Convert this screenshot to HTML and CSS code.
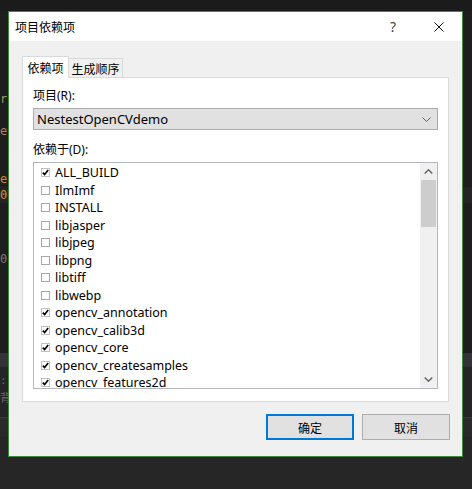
FILE: index.html
```html
<!DOCTYPE html>
<html lang="zh-CN">
<head>
<meta charset="utf-8">
<title>项目依赖项</title>
<link rel="stylesheet" href="styles.css">
</head>
<body>
<div class="screen">
  <div class="editor">
    <div class="topbar"></div>
    <div class="code">
      <div class="ln"></div><div class="ln"></div><div class="ln"></div><div class="ln"></div><div class="ln"></div>
      <div class="ln"><span class="frag olive">r;</span></div>
      <div class="ln"></div>
      <div class="ln"><span class="frag brown">e;</span></div>
      <div class="ln"></div><div class="ln"></div>
      <div class="ln"><span class="frag orange">e;</span></div>
      <div class="ln hl"><span class="frag amber">0;</span></div>
      <div class="ln"></div><div class="ln"></div><div class="ln"></div>
      <div class="ln"><span class="frag grey">0;</span></div>
      <div class="ln"></div><div class="ln"></div><div class="ln"></div><div class="ln"></div><div class="ln"></div>
    </div>
    <div class="band"></div>
    <div class="panelarea">
      <div class="pl"><span class="frag dim">::</span></div>
      <div class="pl"><span class="frag dim">背</span></div>
    </div>
    <div class="status"></div>
    <div class="bottom"></div>
  </div>

  <div class="dialog">
    <div class="titlebar">
      <span class="title">项目依赖项</span>
      <span class="tbtn help">?</span>
      <span class="tbtn close">
        <svg width="10" height="10" viewBox="0 0 10 10"><path d="M0.5 0.5 L9.5 9.5 M9.5 0.5 L0.5 9.5" stroke="#111" stroke-width="1" fill="none"/></svg>
      </span>
    </div>
    <div class="body">
      <div class="tabs">
        <div class="tab active">依赖项</div>
        <div class="tab">生成顺序</div>
      </div>
      <div class="panel">
        <div class="label">项目(R):</div>
        <div class="combo">
          <span class="combo-text">NestestOpenCVdemo</span>
          <svg class="combo-arrow" width="9" height="5" viewBox="0 0 9 5"><path d="M0.5 0.5 L4.5 4.5 L8.5 0.5" stroke="#606060" stroke-width="1" fill="none"/></svg>
        </div>
        <div class="label label2">依赖于(D):</div>
        <div class="listbox">
          <div class="items">
            <div class="item"><span class="cb on"><svg width="7" height="7" viewBox="0 0 7 7"><path d="M0.8 3.6 L2.6 5.6 L6.2 1" stroke="#000" stroke-width="1.6" fill="none"/></svg></span>ALL_BUILD</div>
            <div class="item"><span class="cb"></span>IlmImf</div>
            <div class="item"><span class="cb"></span>INSTALL</div>
            <div class="item"><span class="cb"></span>libjasper</div>
            <div class="item"><span class="cb"></span>libjpeg</div>
            <div class="item"><span class="cb"></span>libpng</div>
            <div class="item"><span class="cb"></span>libtiff</div>
            <div class="item"><span class="cb"></span>libwebp</div>
            <div class="item"><span class="cb on"><svg width="7" height="7" viewBox="0 0 7 7"><path d="M0.8 3.6 L2.6 5.6 L6.2 1" stroke="#000" stroke-width="1.6" fill="none"/></svg></span>opencv_annotation</div>
            <div class="item"><span class="cb on"><svg width="7" height="7" viewBox="0 0 7 7"><path d="M0.8 3.6 L2.6 5.6 L6.2 1" stroke="#000" stroke-width="1.6" fill="none"/></svg></span>opencv_calib3d</div>
            <div class="item"><span class="cb on"><svg width="7" height="7" viewBox="0 0 7 7"><path d="M0.8 3.6 L2.6 5.6 L6.2 1" stroke="#000" stroke-width="1.6" fill="none"/></svg></span>opencv_core</div>
            <div class="item"><span class="cb on"><svg width="7" height="7" viewBox="0 0 7 7"><path d="M0.8 3.6 L2.6 5.6 L6.2 1" stroke="#000" stroke-width="1.6" fill="none"/></svg></span>opencv_createsamples</div>
            <div class="item"><span class="cb on"><svg width="7" height="7" viewBox="0 0 7 7"><path d="M0.8 3.6 L2.6 5.6 L6.2 1" stroke="#000" stroke-width="1.6" fill="none"/></svg></span>opencv_features2d</div>
          </div>
          <div class="scrollbar">
            <div class="sarrow"><svg width="9" height="5" viewBox="0 0 9 5"><path d="M0.7 4.5 L4.5 0.8 L8.3 4.5" stroke="#606060" stroke-width="1.4" fill="none"/></svg></div>
            <div class="thumb"></div>
            <div class="strack"></div>
            <div class="sarrow"><svg width="9" height="5" viewBox="0 0 9 5"><path d="M0.7 0.5 L4.5 4.2 L8.3 0.5" stroke="#606060" stroke-width="1.4" fill="none"/></svg></div>
          </div>
        </div>
      </div>
      <div class="buttons">
        <div class="btn default">确定</div>
        <div class="btn">取消</div>
      </div>
    </div>
  </div>
</div>
</body>
</html>
```
FILE: styles.css
```css
html, body {
  margin: 0;
  padding: 0;
  width: 472px;
  height: 489px;
  overflow: hidden;
  background: #1e1e1e;
}

.screen {
  position: relative;
  width: 472px;
  height: 489px;
  font-family: "Noto Sans", "Noto Sans CJK SC", sans-serif;
  font-size: 12px;
  color: #000;
}

/* background editor */
.editor {
  display: flex;
  flex-direction: column;
  height: 489px;
}
.topbar { height: 11px; background: #1b1b1b; }
.code { height: 342px; background: #1e1e1e; overflow: hidden; }
.ln { height: 16px; line-height: 16px; overflow: hidden; white-space: nowrap; }
.ln.hl { background: #252526; }
.frag {
  display: inline-block;
  font-family: "DejaVu Sans Mono", monospace;
  font-size: 12px;
}
.olive { color: #9a9a62; }
.brown { color: #b0805a; }
.orange { color: #d7832a; }
.amber { color: #c8963c; }
.grey { color: #7a7a7a; }
.dim { color: #6a6a6a; font-size: 11px; }
.band { height: 14px; background: #333337; }
.panelarea { height: 50px; background: #252526; padding-top: 4px; box-sizing: border-box; }
.pl { height: 18px; line-height: 18px; overflow: hidden; white-space: nowrap; }
.status { height: 20px; background: #2a2a2a; border-top: 1px solid #3a3a3a; box-sizing: border-box; }
.bottom { flex: 1; background: #262626; }

/* dialog window */
.dialog {
  position: absolute;
  left: 8px;
  top: 11px;
  width: 455px;
  height: 446px;
  box-sizing: border-box;
  border: 1px solid #3d8a3a;
  background: #f0f0f0;
  display: flex;
  flex-direction: column;
}

.titlebar {
  height: 29px;
  background: #fff;
  display: flex;
  align-items: center;
  padding-left: 6px;
  flex-shrink: 0;
}
.title { flex: 1; font-size: 12px; color: #000; font-family: "Noto Sans CJK SC", sans-serif; }
.tbtn {
  width: 46px;
  height: 29px;
  display: flex;
  align-items: center;
  justify-content: center;
}
.help { font-size: 14px; color: #444; font-family: "Noto Sans", sans-serif; }

.body {
  flex: 1;
  padding: 15px 13px 0 13px;
  display: flex;
  flex-direction: column;
}

.tabs {
  display: flex;
  align-items: flex-end;
  height: 22px;
  margin-bottom: -1px;
  position: relative;
  z-index: 1;
}
.tab {
  box-sizing: border-box;
  height: 20px;
  width: 54px;
  border: 1px solid #d9d9d9;
  border-left: none;
  background: #f0f0f0;
  display: flex;
  align-items: center;
  justify-content: center;
  font-family: "Noto Sans CJK SC", sans-serif;
  font-size: 12px;
}
.tab.active {
  height: 22px;
  width: 47px;
  border-left: 1px solid #d9d9d9;
  border-bottom: none;
  background: #fff;
  padding-bottom: 1px;
}

.panel {
  box-sizing: border-box;
  height: 325px;
  background: #fff;
  border: 1px solid #d9d9d9;
  padding: 10px 10px 0 10px;
}
.label {
  height: 16px;
  line-height: 16px;
  font-family: "Noto Sans", "Noto Sans CJK SC", sans-serif;
}
.label2 { margin-top: 12px; }

.combo {
  box-sizing: border-box;
  margin-top: 4px;
  height: 22px;
  background: #e1e1e1;
  border: 1px solid #adadad;
  display: flex;
  align-items: center;
  padding: 0 6px 0 3px;
  width: 405px;
}
.combo-text { flex: 1; font-size: 13px; }

.listbox {
  box-sizing: border-box;
  margin-top: 4px;
  height: 227px;
  width: 405px;
  border: 1px solid #b4b6bd;
  display: flex;
  background: #fff;
}
.items {
  flex: 1;
  overflow: hidden;
  padding-top: 1px;
}
.item {
  height: 17.5px;
  line-height: 17.5px;
  display: flex;
  align-items: center;
  padding-left: 7px;
  white-space: nowrap;
  font-size: 12.5px;
}
.cb {
  box-sizing: border-box;
  width: 9px;
  height: 9px;
  border: 1px solid #a8a8a8;
  background: #fff;
  margin-right: 5px;
  display: flex;
  align-items: center;
  justify-content: center;
  flex-shrink: 0;
}
.cb.on { border-color: #c0c0c0; }

.scrollbar {
  width: 17px;
  background: #f0f0f0;
  display: flex;
  flex-direction: column;
}
.sarrow {
  height: 17px;
  display: flex;
  align-items: center;
  justify-content: center;
}
.thumb {
  height: 47px;
  margin: 0 1px;
  background: #cdcdcd;
}
.strack { flex: 1; }

.buttons {
  margin-top: 12px;
  display: flex;
  justify-content: flex-end;
  gap: 8px;
  margin-right: -1px;
}
.btn {
  box-sizing: border-box;
  width: 88px;
  height: 26px;
  background: #e1e1e1;
  border: 1px solid #adadad;
  display: flex;
  align-items: center;
  justify-content: center;
  font-family: "Noto Sans CJK SC", sans-serif;
  font-size: 12px;
}
.btn.default { border: 2px solid #0078d7; }
```
